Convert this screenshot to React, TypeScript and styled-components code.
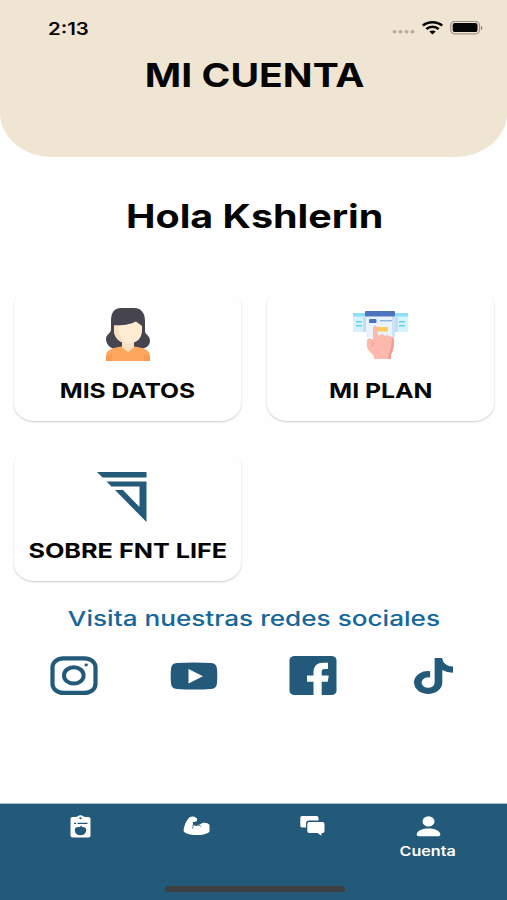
import React from "react";
import styled, { createGlobalStyle } from "styled-components";

const NAVY = "#235979";

const GlobalStyle = createGlobalStyle`
  * { box-sizing: border-box; }
  body { margin: 0; background: #fefefe; }
`;

const Screen = styled.div`
  width: 507px;
  height: 900px;
  display: flex;
  flex-direction: column;
  overflow: hidden;
  background: #fefefe;
  color: #050505;
  font-family: Inter, "Liberation Sans", sans-serif;
`;

const Header = styled.header`
  height: 157px;
  flex: none;
  background: #f0e4d2;
  border-radius: 0 0 52px 52px / 0 0 44px 44px;
`;

const StatusBar = styled.div`
  height: 55px;
  padding: 0 24px 0 48px;
  display: flex;
  align-items: center;
  justify-content: space-between;
`;

const Clock = styled.div`
  padding-top: 2px;
`;

const StatusIcons = styled.div`
  display: flex;
  align-items: center;
  gap: 7px;
`;

const Text = styled.span<{ $size: number; $weight: number; $stretch: number; $origin?: string }>`
  display: inline-block;
  white-space: nowrap;
  line-height: 1;
  font-size: ${(p) => p.$size}px;
  font-weight: ${(p) => p.$weight};
  transform: scaleX(${(p) => p.$stretch});
  transform-origin: ${(p) => p.$origin ?? "center"};
`;

const Title = styled.h1`
  margin: 4px 0 0;
  display: flex;
  justify-content: center;
  padding-left: 3px;
`;

const Greeting = styled.h2`
  margin: 43px 0 0;
  height: 88px;
  padding-left: 2px;
  flex: none;
  display: flex;
  justify-content: center;
`;

const Cards = styled.main`
  flex: none;
  padding: 0 13px 0 14px;
  display: grid;
  grid-template-columns: 227px 227px;
  justify-content: space-between;
  grid-auto-rows: 133px;
  row-gap: 27px;
`;

const Card = styled.button`
  position: relative;
  isolation: isolate;
  border: 0;
  padding: 20px 0 0;
  font: inherit;
  color: inherit;
  display: flex;
  flex-direction: column;
  align-items: center;
  gap: 19px;
  background: none;

  &::before {
    content: "";
    position: absolute;
    z-index: -1;
    inset: 0;
    border-radius: 21px / 17px;
    background: #fefefe;
    box-shadow: 0 1px 2px rgba(0, 0, 0, 0.2);
    clip-path: inset(9px -4px -5px -4px);
  }
`;

const CardIcon = styled.div<{ $shift?: number }>`
  height: 54px;
  margin-right: ${(p) => p.$shift ?? 0}px;
`;

const SocialTitle = styled.p`
  margin: 28px 0 0;
  display: flex;
  justify-content: center;
  color: #176899;
`;

const SocialRow = styled.div`
  margin-top: 26px;
  height: 40px;
  flex: none;
  padding: 0 14px;
  display: grid;
  grid-template-columns: repeat(4, 1fr);
  place-items: center;
  color: ${NAVY};
`;

const TabBar = styled.nav`
  margin-top: auto;
  height: 97px;
  flex: none;
  padding: 11px 21px 8px 22px;
  background: ${NAVY};
  border-top: 1px solid #a9c0cd;
  display: grid;
  grid-template-columns: repeat(4, 116px);
  grid-template-rows: 1fr 6px;
`;

const Tab = styled.div`
  display: flex;
  flex-direction: column;
  align-items: center;
  gap: 8px;
  color: #fff;
`;

const TabIcon = styled.div`
  height: 22px;
  display: flex;
  align-items: center;
`;

const HomeIndicator = styled.div`
  grid-column: 1 / -1;
  justify-self: center;
  margin-left: 2px;
  width: 180px;
  height: 6px;
  border-radius: 3px;
  background: #3e3f42;
`;

const Icon = styled.svg.attrs({ preserveAspectRatio: "none", "aria-hidden": true })`
  display: block;
  flex: none;
`;

const Signal = () => (
  <Icon width="23" height="12" viewBox="0 0 23 12" fill="#b8ab9f">
    {[2, 8, 14, 20].map((x) => (
      <ellipse key={x} cx={x + 0.5} cy="9.7" rx="2" ry="1.7" />
    ))}
  </Icon>
);

const Wifi = () => (
  <Icon width="21" height="14" viewBox="0 0 21 14" fill="none" stroke="#050505" strokeWidth="2.6">
    <path d="M.8 4.6C6.2 .2 14.8 .2 20.2 4.6" />
    <path d="M4.3 8C7.8 5 13.2 5 16.7 8" />
    <path d="M7.3 10.6C9.1 9.1 11.9 9.1 13.7 10.6L10.5 13.4Z" fill="#050505" stroke="none" />
  </Icon>
);

const Battery = () => (
  <Icon width="33" height="14" viewBox="0 0 33 14">
    <rect x=".7" y=".4" width="28.8" height="12.4" rx="4" fill="none" stroke="#9d958a" strokeWidth="1.2" />
    <rect x="2.7" y="2.1" width="24.8" height="9" rx="2.2" fill="#050505" />
    <path d="M31 5c1.7.4 1.7 3.6 0 4z" fill="#81796f" />
  </Icon>
);

const Woman = () => (
  <Icon width="46" height="54" viewBox="0 0 46 54">
    <path d="M16 0H29C37 0 40 6 40 13V23C40 27 45 27 45 33C45 38 40 41 34 41H12C5 41 1 36 1 31C1 26 6 26 6 21V13C6 5 9 0 16 0Z" fill="#46454f" />
    <path d="M17 31H29V44H17Z" fill="#f8dfc1" />
    <path d="M1 53V48C1 42 7 40 17 38.5L23 44L29 38.5C39 40 45 42 45 48V53Z" fill="#ffa75f" />
    <path d="M17 36H29V39L23 44L17 39Z" fill="#f8dfc1" />
    <path d="M7 46V53H1V49Z M39 46V53H45V49Z" fill="#f79b55" />
    <path d="M9 17.5C18 17.5 25 16.5 31 13.5L37 18V22C37 31 31 35.5 23 35.5C15 35.5 9 30 9 22Z" fill="#ffecd2" />
    <path d="M9 17.5V22C9 30 15 35.5 23 35.5C16 32 13 27 13 17.5Z" fill="#f8e0c0" />
  </Icon>
);

const PlanHand = () => (
  <Icon width="57" height="54" viewBox="0 0 57 54">
    <path d="M1 5H56V24H1Z" fill="#d5f3fc" />
    <path d="M1 5H56V8.5H1Z" fill="#8be0f7" />
    <path d="M11 8H15V24H11Z M42 8H46V24H42Z" fill="#c3ddf5" />
    <path d="M4 13H10V14.5H4Z M4 17H10V18.5H4Z M47 13H53V14.5H47Z M47 17H53V18.5H47Z" fill="#69cfee" />
    <path d="M14 7H43V29H14Z" fill="#e9f3fe" />
    <path d="M40 7H43V29H40Z" fill="#cbe1f7" />
    <rect x="13" y="3" width="30" height="5.5" rx="1" fill="#4c75bb" />
    <rect x="17" y="11" width="7.5" height="4" rx="1" fill="#4973b8" />
    <path d="M28 12.3H40V13.3H28Z" fill="#6a96ce" />
    <rect x="22" y="19" width="14" height="4.5" rx="1" fill="#ffcb58" />
    <path d="M21 20C21 16.5 25 16.5 25 20L26 28C29 25.5 32 26 33 28C36 26 38 28 39 29C41 28 42 31 42 33C42 41 40 44 39 47V51H22V48C18 44 15 41 15 38V32C16 29 21 30 21 33Z" fill="#fdb9ad" />
    <path d="M40 29C41.5 29 42 31 42 33C42 41 40 44 39 47V51H36C36 44 40 41 40 29Z" fill="#f59d94" />
    <path d="M20 32C22 35 21 38 19 39" fill="none" stroke="#ef9d96" />
  </Icon>
);

const FntLogo = () => (
  <Icon width="50" height="54" viewBox="0 0 50 54" fill={NAVY}>
    <path d="M0 4H49.5V9.5H5.5Z" />
    <path fillRule="evenodd" d="M9.5 13.5H49.5V54L18 22H26L42.5 39V18.5H14.5Z" />
  </Icon>
);

const Instagram = () => (
  <Icon width="48" height="39" viewBox="0 0 48 39" fill="none" stroke="currentColor">
    <rect x="2.5" y="2.3" width="43" height="34.6" rx="11" ry="9" strokeWidth="4.2" />
    <ellipse cx="23.8" cy="19.4" rx="9.8" ry="8.2" strokeWidth="4" />
    <ellipse cx="36.2" cy="9" rx="1.7" ry="1.4" fill="currentColor" stroke="none" />
  </Icon>
);

const YouTube = () => (
  <Icon width="48" height="28" viewBox="0 0 48 28" fill="currentColor">
    <path
      fillRule="evenodd"
      d="M7 1C18 .2 30 .2 41 1C45 1.3 46.6 3.2 47 7C47.4 12 47.4 16 47 21C46.6 24.8 45 26.7 41 27C30 27.8 18 27.8 7 27C3 26.7 1.4 24.8 1 21C.6 16 .6 12 1 7C1.4 3.2 3 1.3 7 1ZM18.5 7V21.5L33 14.2Z"
    />
  </Icon>
);

const Facebook = () => (
  <Icon width="48" height="39" viewBox="0 0 48 39">
    <rect x=".5" width="47" height="39" rx="5" ry="4.3" fill="currentColor" />
    <path d="M24.5 39V25.7H18V19.5H24.5V16C24.5 10 28.5 6.8 34 6.8H39V13H36C33.3 13 32.7 14.2 32.7 16V19.5H39.8L38.7 25.7H32.7V39Z" fill="#fefefe" />
  </Icon>
);

const TikTok = () => (
  <Icon width="39" height="36" viewBox="0 0 448 512" fill="currentColor">
    <path d="M448 210a210 210 0 0 1-122.8-39.3v178.7A162.6 162.6 0 1 1 185 188.3v89.9a74.6 74.6 0 1 0 52.2 71.2V0h88a121.2 121.2 0 0 0 1.9 22.2A122.2 122.2 0 0 0 381 102.4a121.4 121.4 0 0 0 67 20.1Z" />
  </Icon>
);

const DietIcon = () => (
  <Icon width="21" height="23" viewBox="0 0 21 23">
    <path d="M2.5 2H5C7.5 2 8 .2 10.5 .2S13.500 2 16 2H18.5Q20.5 2 20.5 4V20.5Q20.5 22.500 18.5 22.500H2.500Q.5 22.500 .5 20.5V4Q.5 2 2.500 2Z" fill="#fff" />
    <ellipse cx="10.500" cy="3.200" rx="1.200" ry="1" fill={NAVY} />
    <path d="M4 7.700H6V9.100H4ZM7.500 7.700H17.500V9.100H7.500Z" fill={NAVY} />
    <path d="M10.500 12.300C14.500 11.300 16.500 12.700 16.200 15.500S13.800 20.300 10.500 20.300S5 18.500 4.800 15.500S6.500 11.300 10.500 12.300ZM10 12.300C9.800 11.200 10.500 10.700 12 10.700C12 11.600 11.500 12.300 10 12.300Z" fill={NAVY} />
  </Icon>
);

const ArmIcon = () => (
  <Icon width="27" height="20" viewBox="0 0 27 20">
    <path d="M6.500 1.200Q9 .2 11.500 .8L14 2.500V5L11.500 6L9.700 5.700L10.300 9.200L12.500 9.800L17.300 8.200C19.500 6 24.500 6.200 26.500 9V15.700C24 18.300 17 19.500 11 19C5.500 18.600 1 17 .6 14.800C.8 10 3.500 4 6.500 1.200Z" fill="#fff" />
    <path d="M10.200 8.500C10.200 10 10 11.500 9.500 12.600M13 9.600C15 8.800 17 9.200 18.200 10.500" fill="none" stroke={NAVY} strokeWidth=".8" />
  </Icon>
);

const ChatIcon = () => (
  <Icon width="25" height="20" viewBox="0 0 25 20" fill="#fff">
    <path d="M2 0H16.5Q18.5 0 18.5 2V4.6H9Q6 4.6 6 7.5V11.5H2Q.3 11.5 .3 9.5V2Q.3 0 2 0Z" />
    <path d="M9.2 5.9H22.5Q24.5 5.9 24.5 8V15Q24.5 17 22.5 17H21.5V19.8L17.5 17H9.2Q7.3 17 7.3 15V8Q7.3 5.9 9.2 5.9Z" />
  </Icon>
);

const PersonIcon = () => (
  <Icon width="25" height="21" viewBox="0 0 25 21" fill="#fff">
    <ellipse cx="12.5" cy="5.4" rx="6" ry="5.2" />
    <path d="M.7 18.5C1 14.3 7 12.5 12.5 12.5S24 14.3 24.3 18.5Q24.3 20.2 22.5 20.2H2.5Q.7 20.2 .7 18.5Z" />
  </Icon>
);

const cards = [
  { label: "MIS DATOS", stretch: 1.2, icon: <Woman /> },
  { label: "MI PLAN", stretch: 1.21, icon: <PlanHand /> },
  { label: "SOBRE FNT LIFE", stretch: 1.23, icon: <FntLogo />, iconShift: 11 },
];

const tabs = [
  { icon: <DietIcon /> },
  { icon: <ArmIcon /> },
  { icon: <ChatIcon /> },
  { icon: <PersonIcon />, label: "Cuenta" },
];

export default function App() {
  return (
    <Screen>
      <GlobalStyle />
      <Header>
        <StatusBar>
          <Clock>
            <Text $size={17} $weight={600} $stretch={1.2} $origin="left">2:13</Text>
          </Clock>
          <StatusIcons>
            <Signal />
            <Wifi />
            <Battery />
          </StatusIcons>
        </StatusBar>
        <Title>
          <Text $size={33} $weight={700} $stretch={1.185}>MI CUENTA</Text>
        </Title>
      </Header>
      <Greeting>
        <Text $size={33} $weight={700} $stretch={1.195}>Hola Kshlerin</Text>
      </Greeting>
      <Cards>
        {cards.map((card) => (
          <Card key={card.label}>
            <CardIcon $shift={card.iconShift}>{card.icon}</CardIcon>
            <Text $size={20.5} $weight={700} $stretch={card.stretch}>{card.label}</Text>
          </Card>
        ))}
      </Cards>
      <SocialTitle>
        <Text $size={20.5} $weight={500} $stretch={1.275}>Visita nuestras redes sociales</Text>
      </SocialTitle>
      <SocialRow>
        <Instagram />
        <YouTube />
        <Facebook />
        <TikTok />
      </SocialRow>
      <TabBar>
        {tabs.map((tab, i) => (
          <Tab key={i}>
            <TabIcon>{tab.icon}</TabIcon>
            {tab.label && <Text $size={13} $weight={600} $stretch={1.24}>{tab.label}</Text>}
          </Tab>
        ))}
        <HomeIndicator />
      </TabBar>
    </Screen>
  );
}
